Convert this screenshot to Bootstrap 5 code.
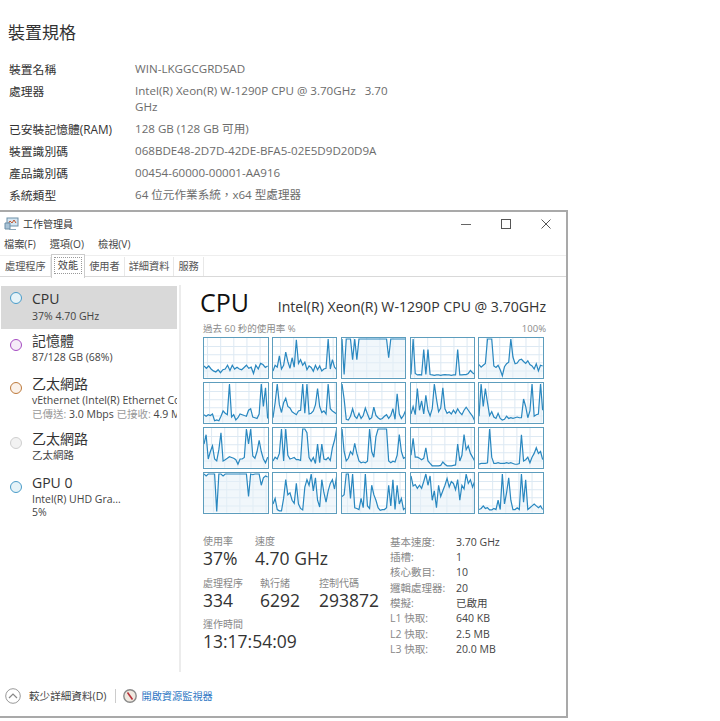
<!DOCTYPE html>
<html lang="zh-Hant">
<head>
<meta charset="utf-8">
<title>裝置規格</title>
<link href="https://cdn.jsdelivr.net/npm/bootstrap@5.3.0/dist/css/bootstrap.min.css" rel="stylesheet">
<style>
html,body{background:#fff;height:721px;overflow:hidden}
body{font-family:"Open Sans","Noto Sans CJK TC",sans-serif;color:#222;font-size:12px;line-height:1.2}
.spec-head{font-size:17px;line-height:24px;margin:0;padding:21px 0 0 8px;font-weight:400;height:59px;color:#333}
.spec-list{padding-left:9px;height:151px;font-size:11.8px}
.spec-row{display:flex;min-height:22px;line-height:16px;padding-top:2px}
.spec-tall{padding-bottom:4px}
.spec-key{width:126px;color:#333;flex:none}
.spec-val{width:255px;color:#6c6c6c;font-size:11.6px}
.tm-win{width:568px;height:508px;border:solid #a9a9a9;border-width:2px 2px 2px 0;display:flex;flex-direction:column;background:#fff}
.tm-title{height:23px;padding-left:4px;font-size:10px;color:#333}
.tm-ctrl{width:40px;height:23px;display:flex;align-items:center;justify-content:center}
.tm-menu{height:18px;padding-left:4px;gap:14px;font-size:10.2px;color:#444}
.tm-tabs{height:22px;margin-top:2px;border-top:1px solid #eee;border-bottom:1px solid #d9d9d9;font-size:10.2px;color:#555;padding-left:1px}
.tm-tab{padding:0 4px;line-height:18px;height:19px;margin-top:1px;border-right:1px solid #e8e8e8}
.tm-tab-wide{padding-right:4px}
.tm-tab-on{background:#fff;border:1px solid #ccc;border-bottom:0;margin-top:-2px;height:24px;line-height:20px;padding:0 2px;color:#444}
.tm-tab-on span{border:1px dotted #999;padding:0 3px;display:block;line-height:15px;margin-top:2px}
.tm-body{flex:1;min-height:0}
.tm-side{width:180px;flex:none;padding-top:9px;overflow:hidden;position:relative}
.tm-side-rule{width:2px;background:#ececec;margin:8px 0 0 -1px;flex:none}
.tm-item{display:flex;width:176px;margin-left:1px;padding-left:9px;overflow:hidden;white-space:nowrap}
.tm-item-on{background:#d9d9d9}
.tm-dot{width:12px;height:12px;border-radius:50%;border:1.5px solid #4a9cc9;background:#e6f3f8;flex:none;margin-top:8px;margin-right:10px}
.tm-dot-mem{border-color:#a64cc2;background:#f5ecf8}
.tm-dot-net{border-color:#bd7a3c;background:#fbf2ea}
.tm-dot-off{border-color:#cfcfcf;background:#f2f2f2}
.tm-name{font-size:14px;line-height:18px;padding-top:1px;color:#333}
.tm-name-on{line-height:20px;padding-top:3px}
.tm-sub{font-size:10.5px;line-height:14px;color:#444}
.tm-line2{line-height:13px}
.tm-dim{color:#999}
.tm-main{flex:1;padding:0 20px 0 22px;min-width:0}
.tm-h1{font-size:25px;line-height:34px;color:#111;margin-left:-3px}
.tm-model{font-size:14.1px;line-height:20px;color:#333;padding-bottom:2px}
.tm-cap{font-size:9.5px;line-height:14px;color:#8b8b8b;margin-top:3px}
.tm-graphs{display:grid;grid-template-columns:repeat(5,1fr);gap:3.6px 3.2px;margin-top:1px;width:341px}
.tm-graph{height:41.5px;border:1.5px solid #5d9dbd;display:block;width:100%;filter:blur(.3px)}
.tm-stats{margin-top:21px}
.tm-left{width:187px;flex:none}
.st-row{display:flex;margin-bottom:6.5px}
.st-row-first{margin-bottom:8.5px}
.st-lab{font-size:10px;line-height:13px;color:#888}
.st-num{font-size:17.5px;line-height:21px;color:#333;white-space:nowrap}
.st-a{width:52px}.st-b{width:57px}.st-c{width:59px}
.kv-row{display:flex;line-height:15.3px;font-size:10.5px;color:#444}
.kv-row span:first-child{width:66px;color:#888}
.tm-foot{height:44px;font-size:10.6px;color:#444;padding:4px 0 0 5px}
.tm-sep{width:1px;height:14px;background:#ccc;margin:0 7px 0 8px}
.tm-link{color:#2f78c4;margin-left:5px;font-size:10.2px}
</style>
</head>
<body>
<h1 class="spec-head">裝置規格</h1>
<div class="spec-list">
  <div class="spec-row"><div class="spec-key">裝置名稱</div><div class="spec-val">WIN-LKGGCGRD5AD</div></div>
  <div class="spec-row spec-tall"><div class="spec-key">處理器</div><div class="spec-val">Intel(R) Xeon(R) W-1290P CPU @ 3.70GHz &nbsp;&nbsp;3.70 GHz</div></div>
  <div class="spec-row"><div class="spec-key">已安裝記憶體(RAM)</div><div class="spec-val">128 GB (128 GB 可用)</div></div>
  <div class="spec-row"><div class="spec-key">裝置識別碼</div><div class="spec-val">068BDE48-2D7D-42DE-BFA5-02E5D9D20D9A</div></div>
  <div class="spec-row"><div class="spec-key">產品識別碼</div><div class="spec-val">00454-60000-00001-AA916</div></div>
  <div class="spec-row"><div class="spec-key">系統類型</div><div class="spec-val">64 位元作業系統，x64 型處理器</div></div>
</div>
<div class="tm-win">
  <div class="tm-title d-flex align-items-center">
    <svg width="15" height="14" viewBox="0 0 15 14" class="me-1"><rect x="3" y="1" width="11" height="8" fill="#d5e6f2" stroke="#6d8fa8"/><path d="M4 7l2-3 2 2 2-3 2 3" fill="none" stroke="#c0562f"/><path d="M1 6h5v6H1z" fill="#a9c3d6" stroke="#6d8fa8"/><path d="M5 12h7v1H5z" fill="#8aa5b8"/></svg>
    <span>工作管理員</span>
    <div class="ms-auto d-flex">
      <div class="tm-ctrl"><svg width="10" height="10"><path d="M0 5.5h10" stroke="#666"/></svg></div>
      <div class="tm-ctrl"><svg width="10" height="10"><rect x=".5" y=".5" width="9" height="9" fill="none" stroke="#555"/></svg></div>
      <div class="tm-ctrl"><svg width="10" height="10"><path d="M.5.5l9 9M9.5.5l-9 9" stroke="#555" fill="none"/></svg></div>
    </div>
  </div>
  <div class="tm-menu d-flex align-items-center"><span>檔案(F)</span><span>選項(O)</span><span>檢視(V)</span></div>
  <div class="tm-tabs d-flex">
    <div class="tm-tab">處理程序</div>
    <div class="tm-tab tm-tab-on"><span>效能</span></div>
    <div class="tm-tab tm-tab-wide">使用者</div>
    <div class="tm-tab">詳細資料</div>
    <div class="tm-tab">服務</div>
  </div>
  <div class="tm-body d-flex flex-column">
    <div class="d-flex flex-grow-1" style="min-height:0">
      <div class="tm-side">
        <div class="tm-item tm-item-on" style="height:43px"><div class="tm-dot" style="margin-top:6px"></div><div><div class="tm-name tm-name-on">CPU</div><div class="tm-sub">37% 4.70 GHz</div></div></div>
        <div class="tm-item" style="margin-top:2px;height:43px"><div class="tm-dot tm-dot-mem"></div><div><div class="tm-name">記憶體</div><div class="tm-sub">87/128 GB (68%)</div></div></div>
        <div class="tm-item" style="height:55px"><div class="tm-dot tm-dot-net"></div><div><div class="tm-name">乙太網路</div><div class="tm-sub">vEthernet (Intel(R) Ethernet Connection</div><div class="tm-sub"><span class="tm-dim">已傳送:</span> 3.0 Mbps <span class="tm-dim">已接收:</span> 4.9 Mbps</div></div></div>
        <div class="tm-item" style="height:44px"><div class="tm-dot tm-dot-off"></div><div><div class="tm-name">乙太網路</div><div class="tm-sub">乙太網路</div></div></div>
        <div class="tm-item" style="height:56px"><div class="tm-dot"></div><div><div class="tm-name">GPU 0</div><div class="tm-sub">Intel(R) UHD Gra...</div><div class="tm-sub tm-line2">5%</div></div></div>
      </div>
      <div class="tm-side-rule"></div>
      <div class="tm-main">
        <div class="d-flex justify-content-between align-items-end" style="margin-top:8px"><div class="tm-h1">CPU</div><div class="tm-model">Intel(R) Xeon(R) W-1290P CPU @ 3.70GHz</div></div>
        <div class="tm-cap d-flex justify-content-between"><span>過去 60 秒的使用率 %</span><span>100%</span></div>
        <div class="tm-graphs" id="graphs"></div>
        <div class="tm-stats d-flex">
          <div class="tm-left">
            <div class="st-row st-row-first"><div class="st-a"><div class="st-lab">使用率</div><div class="st-num">37%</div></div><div><div class="st-lab">速度</div><div class="st-num">4.70 GHz</div></div></div>
            <div class="st-row"><div class="st-b"><div class="st-lab">處理程序</div><div class="st-num">334</div></div><div class="st-c"><div class="st-lab">執行緒</div><div class="st-num">6292</div></div><div><div class="st-lab">控制代碼</div><div class="st-num">293872</div></div></div>
            <div class="st-row"><div><div class="st-lab">運作時間</div><div class="st-num">13:17:54:09</div></div></div>
          </div>
          <div>
            <div class="kv-row"><span>基本速度:</span><span>3.70 GHz</span></div>
            <div class="kv-row"><span>插槽:</span><span>1</span></div>
            <div class="kv-row"><span>核心數目:</span><span>10</span></div>
            <div class="kv-row"><span>邏輯處理器:</span><span>20</span></div>
            <div class="kv-row"><span>模擬:</span><span>已啟用</span></div>
            <div class="kv-row"><span>L1 快取:</span><span>640 KB</span></div>
            <div class="kv-row"><span>L2 快取:</span><span>2.5 MB</span></div>
            <div class="kv-row"><span>L3 快取:</span><span>20.0 MB</span></div>
          </div>
        </div>
      </div>
    </div>
    <div class="tm-foot d-flex align-items-center">
      <svg width="16" height="16" viewBox="0 0 16 16" class="me-2"><circle cx="8" cy="8" r="7.3" fill="#fff" stroke="#999"/><path d="M4 10l4-4 4 4" fill="none" stroke="#888" stroke-width="1.2"/></svg>
      <span>較少詳細資料(D)</span>
      <div class="tm-sep"></div>
      <svg width="14" height="14" viewBox="0 0 14 14"><circle cx="7" cy="7" r="6.2" fill="#efe9e0" stroke="#8a8a8a" stroke-width="1.4"/><path d="M4.5 3.5l5 7" stroke="#b8323a" stroke-width="1.6"/></svg>
      <span class="tm-link">開啟資源監視器</span>
    </div>
  </div>
</div>
<script>
var data=[
[28,22,28,20,15,12,18,10,18,20,30,16,30,20,25,20,18,24,30,22,25,8,30,20,35,32,24,28],
[15,30,25,55,20,30,65,40,22,50,25,98,35,45,30,38,18,28,24,14,30,18,28,15,20,22,100,20,45,25,18],
[100,5,100,100,100,45,100,45,100,100,100,100,100,100,100,100,100,100,100,100,100,100,50,100,100,100,100,100,100,100,100],
[5,100,8,4,5,4,72,5,72,5,4,3,4,4,3,4,5,4,4,3,4,4,72,4,4,5,5,8,16,10,6],
[32,25,30,35,100,100,100,28,24,30,18,2,26,34,38,100,52,34,36,44,46,40,35,42,32,28,20,34,15,30,28],
[18,14,18,16,20,2,4,2,14,28,22,18,100,12,18,4,10,20,18,16,14,30,34,12,10,8,20,100,40,90,8],
[10,50,100,45,24,50,62,40,36,26,22,18,28,30,100,22,100,20,22,28,44,88,40,24,28,20,100,34,28,24,20],
[100,60,6,4,14,34,14,8,22,8,16,36,20,6,10,38,16,10,6,8,14,18,8,16,34,6,74,20,8,16,30],
[20,40,18,88,30,55,20,70,30,15,34,100,60,26,36,90,34,22,26,20,30,22,34,24,18,30,38,30,22,14,2],
[14,100,40,88,50,16,26,12,8,22,8,4,6,14,8,10,8,10,12,10,10,60,40,10,28,100,14,18,20,100,30],
[60,85,20,40,55,20,15,45,90,15,18,22,26,24,22,18,6,20,20,24,100,60,100,28,22,40,70,40,20,10,25],
[15,25,20,35,100,15,100,30,20,22,24,18,18,16,100,100,90,24,14,24,8,60,10,60,20,18,24,16,50,70,100],
[100,40,15,22,40,32,62,35,15,10,12,10,14,100,40,25,80,100,100,100,100,100,15,10,14,12,30,85,40,22,25],
[30,75,25,25,22,18,22,50,15,8,2,2,2,2,3,12,6,2,2,2,3,4,60,15,30,85,45,55,35,25,15],
[6,8,8,8,10,100,25,8,8,10,8,8,8,10,8,10,8,6,6,8,85,15,18,25,10,25,35,50,35,40,18],
[100,95,100,100,100,100,0,100,100,95,100,100,100,100,100,100,100,100,100,100,100,40,100,98,100,100,100,70,90,95,92],
[20,35,5,2,2,35,85,45,50,30,22,75,20,8,4,65,85,70,100,55,90,30,12,85,50,25,55,75,85,60,95],
[40,45,100,100,35,100,10,8,5,35,10,100,15,8,70,45,30,10,3,5,5,10,70,15,85,5,70,20,35,5,10],
[95,68,72,62,70,62,80,100,70,95,30,55,10,70,40,55,70,88,65,80,75,58,85,30,70,60,100,75,85,65,80],
[5,8,15,8,10,4,4,8,5,30,5,100,20,50,90,30,5,5,10,5,100,25,85,5,10,15,20,15,10,15,5]
];
var html='';
data.forEach(function(d,k){
  var ci=k%5,ri=Math.floor(k/5),W=63,H=39,n=d.length-1;
  var pts=d.map(function(v,i){return (i*W/n).toFixed(1)+','+(H-1-v*(H-2)/100).toFixed(1)}).join(' ');
  var g='';
  for(var x=3+(ci*4+ri*2)%12;x<W;x+=13)g+='<path d="M'+x+'.5 0V'+H+'" stroke="#dde9f3"/>';
  for(var y=8;y<H;y+=8)g+='<path d="M0 '+y+'.5H'+W+'" stroke="#dde9f3"/>';
  html+='<svg class="tm-graph" viewBox="0 0 '+W+' '+H+'" preserveAspectRatio="none">'+g+'<polygon points="0,'+H+' '+pts+' '+W+','+H+'" fill="#e6f0f8" fill-opacity=".55"/><polyline points="'+pts+'" fill="none" stroke="#2a88c0" stroke-width="1.2"/></svg>';
});
document.getElementById('graphs').innerHTML=html;
</script>
<script src="https://cdn.jsdelivr.net/npm/bootstrap@5.3.0/dist/js/bootstrap.bundle.min.js"></script>
</body>
</html>
